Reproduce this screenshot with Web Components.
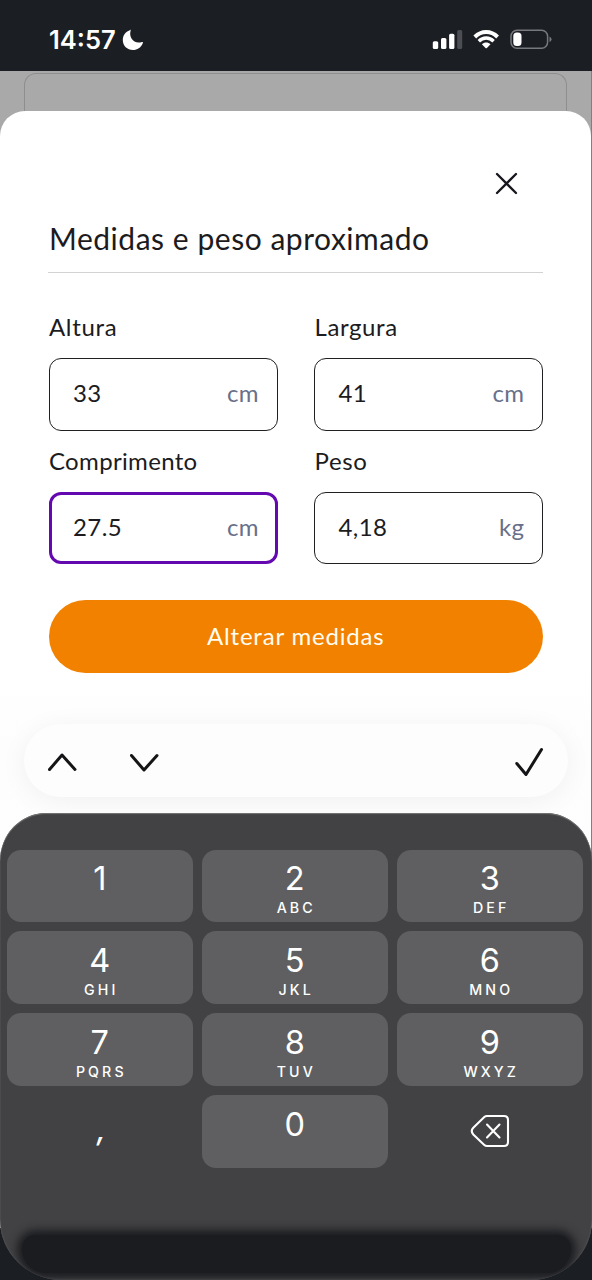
<!DOCTYPE html>
<html lang="pt-BR">
<head>
<meta charset="utf-8">
<title>Medidas e peso aproximado</title>
<style>
html,body{margin:0;height:100%;overflow:hidden;background:#1b1e23}
body{font-family:Lato,"Open Sans",sans-serif;color:#1c1b20}
</style>
</head>
<body>
<phone-screen>
  <status-bar slot="status" time="14:57"></status-bar>
  <measure-sheet slot="sheet" heading="Medidas e peso aproximado">
    <measure-field label="Altura" unit="cm" value="33" style="--ls:.65px"></measure-field>
    <measure-field label="Largura" unit="cm" value="41" style="--ls:.6px"></measure-field>
    <measure-field label="Comprimento" unit="cm" value="27.5" focused style="--ls:.33px"></measure-field>
    <measure-field label="Peso" unit="kg" value="4,18" style="--ls:.6px"></measure-field>
    <pill-button slot="action">Alterar medidas</pill-button>
  </measure-sheet>
  <form-accessory slot="keyboard"></form-accessory>
  <number-pad slot="keyboard"></number-pad>
</phone-screen>
<script>
const define=(name,html,setup)=>customElements.define(name,class extends HTMLElement{
  connectedCallback(){
    if(this.shadowRoot)return;
    const t=document.createElement('template');
    t.innerHTML=html;
    this.attachShadow({mode:'open'}).append(t.content.cloneNode(true));
    if(setup)setup(this,this.shadowRoot);
  }
});

define('phone-screen',`<style>
:host{display:grid;grid-template:71px 1fr/100%;width:592px;height:1280px;overflow:hidden;background:#1b1e23}
.page{grid-area:2/1;box-sizing:border-box;height:1157px;padding:2px 1px 0 0;background:#a9a9a9;display:grid;grid-template:37.500px 1fr/100%;box-shadow:inset -1px 0 #808082}
.card{grid-area:1/1;margin:0 24px;border:1.5px solid #8d8e90;border-bottom:0;border-radius:12px 12px 0 0}
.over{grid-area:2/1;z-index:1;align-self:end;min-width:0}
</style>
<slot name="status"></slot>
<div class="page"><div class="card"></div><slot name="sheet"></slot></div>
<div class="over"><slot name="keyboard"></slot></div>`);

define('status-bar',`<style>
:host{display:flex;box-sizing:border-box;height:71px;padding:8px 40px 0 49px;align-items:center;background:#1b1e23;color:#fff}
.t{font:600 25.5px/30px Inter,sans-serif;letter-spacing:0;width:67px;white-space:nowrap}
svg{display:block}
.moon{margin:0 auto 0 6px}
.icons{display:flex;align-items:center}
</style>
<span class="t"></span>
<svg class="moon" width="22" height="22" viewBox="0 0 22 22"><path fill="#fff" d="M7.8 1.2C8.6.6 9 .8 8.600 1.800C6.700 8.500 11.500 15 19.300 13.200C20.800 12.800 21.300 13.100 20.700 14.500C18.800 18.700 15.300 21 11 21C5.200 21 .8 16.800.8 11C.8 6.500 3.500 2.700 7.800 1.200Z"/></svg>
<div class="icons">
<svg width="120" height="22" viewBox="0 0 120 22">
<g fill="#fff"><rect x=".8" y="12.300" width="5.400" height="7.700" rx="1.500"/><rect x="9" y="9" width="5.400" height="11" rx="1.500"/><rect x="17.100" y="4.800" width="5.300" height="15.200" rx="1.500"/></g>
<rect x="25.200" y="1" width="5" height="19" rx="1.500" fill="#4c4e53"/>
<g fill="none" stroke="#fff" stroke-width="3.900"><path d="M42.800 8C49.400 1.400 59 1.400 65.600 8"/><path d="M46.800 12.200C51.100 8 57.300 8 61.600 12.200" stroke-width="3.400"/></g>
<path fill="#fff" d="M49.900 15.200C52.400 13 56 13 58.500 15.200L54.900 19Q54.200 19.600 53.500 19Z"/>
<rect x="79" y="1.200" width="36.600" height="18" rx="6" fill="none" stroke="#77797d" stroke-width="1.500"/>
<rect x="81.300" y="3.500" width="8.200" height="13.500" rx="3.500" fill="#fff"/>
<path fill="#77797d" d="M117.500 7.500q2 .9 2 2.800t-2 2.800z"/>
</svg></div>`,(h,r)=>{r.querySelector('.t').textContent=h.getAttribute('time')});

define('measure-sheet',`<style>
:host{display:block;grid-area:2/1;box-sizing:border-box;border-radius:25px 25px 0 0;padding:60.500px 48px 0;background:linear-gradient(#fff 560px,#fdfdfd 640px,#fff 900px)}
.close{display:flex;justify-content:flex-end;padding-right:24.500px;height:27px}
h1{font-weight:400;font-size:30px;line-height:36px;letter-spacing:.53px;margin:22px 0 0;padding:0 0 15.500px 1px;white-space:nowrap;border-bottom:1.500px solid #d2d2d4;height:36px}
.grid{display:grid;grid-template-columns:229px 229px;column-gap:36.500px;margin:36.500px 0 0 .5px;grid-auto-rows:133.500px}
.action{margin:23.500px 0 0 .5px}
</style>
<div class="close"><svg width="25" height="25" viewBox="0 0 25 25"><path d="M3 3L22 22M22 3L3 22" fill="none" stroke="#17161d" stroke-width="2.300" stroke-linecap="round"/></svg></div>
<h1></h1><div class="grid"><slot></slot></div><div class="action"><slot name="action"></slot></div>`,(h,r)=>{r.querySelector('h1').textContent=h.getAttribute('heading')});

define('measure-field',`<style>
:host{display:block;font-size:24px;line-height:36px;letter-spacing:var(--ls)}
.l{display:block;padding-left:.5px;margin-bottom:13px}
.box{box-sizing:border-box;height:72.500px;border:1.500px solid #202023;border-radius:12px;background:#fff;display:flex;justify-content:space-between;align-items:center;padding:0 17.500px 2px 23.500px;letter-spacing:.4px}
:host([focused]) .box{border:3px solid #6409b0;padding:0 15.500px 2px 21.500px}
.u{color:#68708a}
</style><span class="l"></span><div class="box"><span class="v"></span><span class="u"></span></div>`,(h,r)=>{
  r.querySelector('.l').textContent=h.getAttribute('label');
  r.querySelector('.v').textContent=h.getAttribute('value');
  r.querySelector('.u').textContent=h.getAttribute('unit');
});

define('pill-button',`<style>
:host{display:flex;box-sizing:border-box;height:73px;padding-bottom:1px;border-radius:37px;background:#f28100;color:#fffdf2;align-items:center;justify-content:center;font-size:24px;letter-spacing:.8px}
</style><slot></slot>`);

define('form-accessory',`<style>
:host{display:flex;box-sizing:border-box;height:73px;margin:0 24px 16px;width:544px;border-radius:37px;background:#fdfdfd;box-shadow:0 4px 28px rgba(0,0,0,.055);align-items:center;padding:2px 23px 0;gap:50px}
svg{display:block;fill:none;stroke:#151517;stroke-width:3;stroke-linecap:round;stroke-linejoin:round}
.ok{margin-left:auto}
</style>
<svg width="32" height="24" viewBox="0 0 32 24"><path d="M2.500 19.500L15 5L28 19.500"/></svg>
<svg width="32" height="24" viewBox="0 0 32 24"><path d="M2.500 5.500L15 20L28 5.500"/></svg>
<svg class="ok" width="30" height="32" viewBox="0 0 30 32"><path d="M1.800 17.500L11 28.500L26.500 3.500"/></svg>`);

define('number-pad',`<style>
:host{display:grid;box-sizing:border-box;width:592px;height:467px;border-radius:46px 46px 62px 62px/48px 48px 60px 60px;background:#424244;overflow:hidden;padding:36.500px 9.500px 0 7px;box-shadow:inset 0 1px 1px #777,inset 0 -1px 2px #56565a;grid-template:356px 1fr/100%}
.keys{grid-area:1/1;display:grid;grid-template-columns:repeat(3,1fr);gap:9.400px;grid-auto-rows:72.500px}
.glow{grid-area:2/1;margin:29px 12px 7px 15px;border-radius:24px 24px 42px 42px;background:#1b1c20;box-shadow:0 0 9px 5px #1b1c20}
</style>
<div class="keys"></div><div class="glow"></div>`,(h,r)=>{
  const keys=[['1',''],['2','ABC'],['3','DEF'],['4','GHI'],['5','JKL'],['6','MNO'],['7','PQRS'],['8','TUV'],['9','WXYZ'],[',','',1],['0',''],['','',1]];
  for(const [d,l,bare] of keys){
    const k=document.createElement('pad-key');
    k.setAttribute('digit',d);k.setAttribute('letters',l);
    if(bare)k.setAttribute('bare','');
    r.querySelector('.keys').append(k);
  }
});

define('pad-key',`<style>
:host{display:flex;flex-direction:column;align-items:center;border-radius:14px;background:#5f5f61;color:#fff;font-family:Inter,sans-serif}
:host([bare]){background:none;justify-content:center}
.d{font-size:32.500px;line-height:40px;margin-top:9.700px}
:host([bare]) .d{font-size:30px;font-weight:500;font-style:italic;margin:-4px 0 0 3px}
.l{font-size:14.200px;line-height:18px;font-weight:500;letter-spacing:3.100px;margin-right:-3px;margin-top:.3px}
svg{display:block}
</style><span class="d"></span><span class="l"></span>`,(h,r)=>{
  const d=h.getAttribute('digit'),l=h.getAttribute('letters');
  if(!d){
    r.querySelector('.d').remove();r.querySelector('.l').remove();
    r.append(Object.assign(document.createElement('template'),{innerHTML:`<svg width="40" height="34" viewBox="0 0 40 34"><g fill="none" stroke="#fff" stroke-width="2.100" stroke-linejoin="round" stroke-linecap="round"><path d="M17 2H34Q38 2 38 6V28Q38 32 34 32H17Q15.500 32 14.300 30.900L3.300 20.500Q.2 17 3.300 13.700L14.300 3.100Q15.500 2 17 2Z"/><path d="M17 10.500L29.500 23.500M29.500 10.500L17 23.500"/></g></svg>`}).content);
    return;
  }
  r.querySelector('.d').textContent=d;
  if(l)r.querySelector('.l').textContent=l;else r.querySelector('.l').remove();
});
</script>
</body>
</html>
